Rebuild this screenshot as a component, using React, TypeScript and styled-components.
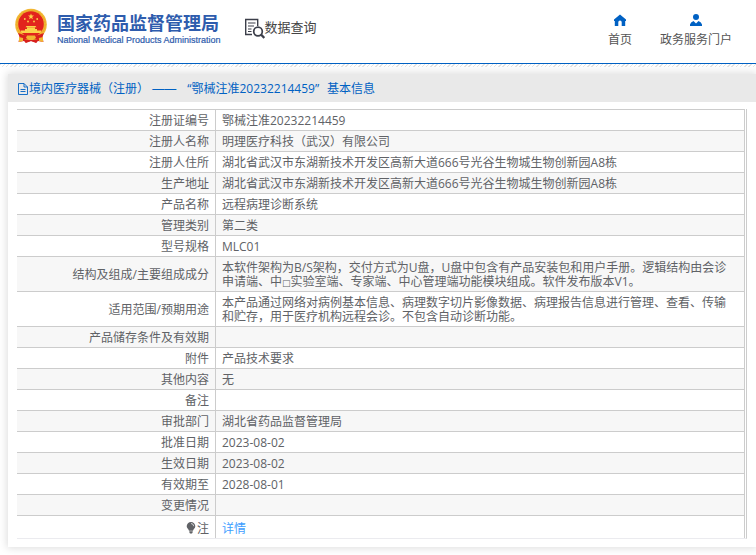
import React from "react";
import styled, { createGlobalStyle } from "styled-components";

const GlobalStyle = createGlobalStyle`
  * { box-sizing: border-box; }
  body {
    margin: 0;
    background: #fff;
    color: #606266;
    font: 12px/14px "Open Sans", "Noto Sans CJK SC", sans-serif;
  }
`;

const Header = styled.header`
  display: flex;
  align-items: flex-start;
  height: 64px;
  padding: 8px 24px 0 14px;
  border-bottom: 1px solid #0061c3;
`;

const Hatch = styled.div`
  height: 3px;
  background: repeating-linear-gradient(135deg, #e4e4e4 0 1px, #fff 1px 3px);
`;

const Brand = styled.a`
  display: flex;
  gap: 9px;
  color: #2e5cad;
  text-decoration: none;
`;

const BrandText = styled.span`
  display: flex;
  flex-direction: column;
  padding-top: 4px;
`;

const BrandName = styled.strong`
  font: bold 18px/20px "Noto Sans CJK SC", sans-serif;
`;

const BrandSub = styled.span`
  padding-top: 2px;
  font: 400 9px/12px "Liberation Sans", sans-serif;
  -webkit-text-stroke: 0.2px #2e5cad;
  white-space: nowrap;
`;

const Section = styled.h1`
  display: flex;
  flex: 1;
  margin: 0;
  padding: 10px 0 0 24px;
  color: #444;
  font: 400 13px/18px "Noto Sans CJK SC", sans-serif;
`;

const Nav = styled.nav`
  display: flex;
  gap: 28px;
  padding-top: 6px;
`;

const NavLink = styled.a`
  display: flex;
  flex-direction: column;
  align-items: center;
  gap: 7px;
  color: #555;
  line-height: 14px;
  text-decoration: none;

  svg { fill: #0061c3; }
`;

const Panel = styled.main`
  margin: 7px 0 8px 8px;
  background: #fff;
  box-shadow: 0 0 8px 1px rgba(0, 0, 0, 0.14);
`;

const PanelTitle = styled.h2`
  display: flex;
  align-items: center;
  height: 28px;
  margin: 0;
  padding: 2px 0 0 10px;
  background: #e9e9e9;
  color: #0061c3;
  font-size: 12px;
  font-weight: 400;
  white-space: pre;

  svg { margin-right: 1px; }
`;

const Dash = styled.span`
  font-family: "Liberation Sans", sans-serif;
`;

const Quote = styled.span<{ $side: "open" | "close" }>`
  width: 12px;
  text-align: ${({ $side }) => ($side === "open" ? "right" : "left")};
`;

const TableWrap = styled.div`
  padding: 7px 9px 8px;
`;

const TableFrame = styled.div`
  padding-right: 1px;
  border-right: 1px solid #ccc;
  border-bottom: 1px solid #ebebef;
`;

const Table = styled.table`
  width: 100%;
  border-collapse: separate;
  border-spacing: 0;
  table-layout: fixed;

  tr:nth-child(even) { background: #f7f7f7; }
`;

const Label = styled.th`
  width: 199px;
  padding: 4px 6px 2px;
  border-top: 1px solid #ccc;
  border-right: 1px solid #ccc;
  font-weight: 400;
  text-align: right;
`;

const Value = styled.td`
  height: 21px;
  padding: 4px 10px 2px 6px;
  border-top: 1px solid #ccc;
  border-right: 1px solid #ccc;
`;

const MissingGlyph = styled.span`
  font: 9px/12px "DejaVu Sans", sans-serif;
`;

const NoteRow = styled.tr`
  ${Label}, ${Value} { height: 23px; padding-top: 6px; }
  svg { vertical-align: -1px; margin-right: 1px; }
`;

const DetailLink = styled.a`
  color: #409eff;
  text-decoration: none;
`;

const address = "湖北省武汉市东湖新技术开发区高新大道666号光谷生物城生物创新园A8栋";

const rows: [string, React.ReactNode][] = [
  ["注册证编号", "鄂械注准20232214459"],
  ["注册人名称", "明理医疗科技（武汉）有限公司"],
  ["注册人住所", address],
  ["生产地址", address],
  ["产品名称", "远程病理诊断系统"],
  ["管理类别", "第二类"],
  ["型号规格", "MLC01"],
  [
    "结构及组成/主要组成成分",
    <>
      本软件架构为B/S架构，交付方式为U盘，U盘中包含有产品安装包和用户手册。逻辑结构由会诊申请端、中<MissingGlyph>□</MissingGlyph>实验室端、专家端、中心管理端功能模块组成。软件发布版本V1。
    </>,
  ],
  [
    "适用范围/预期用途",
    "本产品通过网络对病例基本信息、病理数字切片影像数据、病理报告信息进行管理、查看、传输和贮存，用于医疗机构远程会诊。不包含自动诊断功能。",
  ],
  ["产品储存条件及有效期", ""],
  ["附件", "产品技术要求"],
  ["其他内容", "无"],
  ["备注", ""],
  ["审批部门", "湖北省药品监督管理局"],
  ["批准日期", "2023-08-02"],
  ["生效日期", "2023-08-02"],
  ["有效期至", "2028-08-01"],
  ["变更情况", ""],
];

const Emblem = () => (
  <svg width="34" height="36" viewBox="0 0 34 36" aria-hidden="true">
    <path d="M6 27 4.500 34 10 33 12 35 17 33 22 35 24 33 29.500 34 28 27Z" fill="#d8201c" />
    <circle cx="17" cy="16.500" r="15.800" fill="#f2b632" />
    <circle cx="17" cy="16.500" r="14" fill="none" stroke="#e8a626" strokeWidth="1" strokeDasharray="2 1" />
    <circle cx="17" cy="16" r="12.800" fill="#e2231d" />
    <path d="m17 5.500 .8 2.100h2.200l-1.800 1.400.7 2.200-1.900-1.300-1.900 1.300.7-2.200L14 7.600h2.200Z" fill="#fbd34a" />
    <g fill="#fbd34a">
      <circle cx="10.800" cy="11" r=".9" />
      <circle cx="23.200" cy="11" r=".9" />
      <circle cx="14" cy="13.500" r=".9" />
      <circle cx="20" cy="13.500" r=".9" />
      <path d="M12.500 18h9l1 1.300h-11zM13 19.500h8v1.500h-8zM6.500 22.500h21l-1 2.500h-19zM11 21h12v2H11z" />
    </g>
    <path d="M4 25q13 6 26 0l-2 5q-11 3-22 0Z" fill="#d8201c" />
    <path d="M13 27.500h8l1 2.500-3 2h-4l-3-2Z" fill="#f2b632" />
    <path d="M5 29v5l4-1v-3ZM29 29v5l-4-1v-3Z" fill="#f2b632" />
    <path d="M12 32h10l1 2.500-6-1.500-6 1.500Z" fill="#d8201c" />
  </svg>
);

const SearchDoc = () => (
  <svg width="20" height="21" viewBox="0 0 20 21" fill="none" stroke="#3c3f4a" aria-hidden="true">
    <path d="M7 16.500H.7V1.500h12V8" strokeWidth="1.400" />
    <path d="M3 5h7.500M3 8h6M3 11h3.500M3 13.500h3.500" strokeWidth="1.200" />
    <circle cx="13" cy="13.500" r="4.300" strokeWidth="1.700" />
    <path d="m16 16.500 3.300 3.500" strokeWidth="2.300" />
  </svg>
);

const Home = () => (
  <svg width="12" height="12" viewBox="0 0 12 12" aria-hidden="true">
    <path d="M6 .5 0 5.500V7h.8v5h3.500V8.300a1.700 1.700 0 0 1 3.400 0V12h3.500V7h.8V5.500Z" />
  </svg>
);

const User = () => (
  <svg width="12" height="12" viewBox="0 0 12 12" aria-hidden="true">
    <circle cx="6" cy="3" r="3" />
    <path d="M0 12V10.500Q.5 8 3.500 7L6 9.500 8.500 7Q11.500 8 12 10.500V12Z" />
  </svg>
);

const FileIcon = () => (
  <svg width="10" height="12" viewBox="0 0 10 12" fill="none" stroke="#0061c3" aria-hidden="true">
    <path d="M.5.5h5.500l3.500 3.500v7.500h-9ZM6 .5V4h3.500M2.500 6.500h5M2.500 8.500h5" strokeWidth=".9" />
  </svg>
);

const Bulb = () => (
  <svg width="10" height="12" viewBox="0 0 10 12" fill="#606266" aria-hidden="true">
    <path d="M5 0a4.300 4.300 0 0 0-4.300 4.300c0 2 1.800 2.700 2.300 4.400h4c.5-1.700 2.300-2.400 2.300-4.400A4.300 4.300 0 0 0 5 0ZM3.300 9.300h3.400v1L6 11.500H4l-.7-1.200Z" />
    <path d="M5 1.500a2.800 2.800 0 0 1 2.700 2.700" fill="none" stroke="#fff" strokeWidth=".7" />
  </svg>
);

export default function App() {
  return (
    <>
      <GlobalStyle />
      <Header>
        <Brand href="#">
          <Emblem />
          <BrandText>
            <BrandName>国家药品监督管理局</BrandName>
            <BrandSub>National Medical Products Administration</BrandSub>
          </BrandText>
        </Brand>
        <Section>
          <SearchDoc />
          数据查询
        </Section>
        <Nav>
          <NavLink href="#"><Home />首页</NavLink>
          <NavLink href="#"><User />政务服务门户</NavLink>
        </Nav>
      </Header>
      <Hatch />
      <Panel>
        <PanelTitle>
          <FileIcon />
          境内医疗器械（注册） <Dash>—— </Dash>
          <Quote $side="open">“</Quote>鄂械注准20232214459<Quote $side="close">”</Quote>基本信息
        </PanelTitle>
        <TableWrap>
          <TableFrame>
            <Table>
              <tbody>
                {rows.map(([label, value]) => (
                  <tr key={label}>
                    <Label scope="row">{label}</Label>
                    <Value>{value}</Value>
                  </tr>
                ))}
                <NoteRow>
                  <Label scope="row"><Bulb />注</Label>
                  <Value><DetailLink href="#">详情</DetailLink></Value>
                </NoteRow>
              </tbody>
            </Table>
          </TableFrame>
        </TableWrap>
      </Panel>
    </>
  );
}
